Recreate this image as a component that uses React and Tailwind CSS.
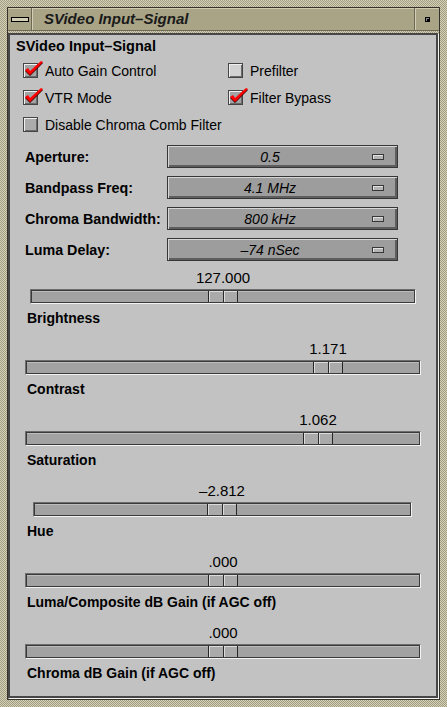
import React from 'react';

const CHECKS = [
  [
    { label: 'Auto Gain Control', checked: true, fill: 'bg-[#a3a3a3]' },
    { label: 'Prefilter', checked: false, fill: 'bg-[#d2d2d2]' },
  ],
  [
    { label: 'VTR Mode', checked: true, fill: 'bg-[#a3a3a3]' },
    { label: 'Filter Bypass', checked: true, fill: 'bg-[#a3a3a3]' },
  ],
  [{ label: 'Disable Chroma Comb Filter', checked: false, fill: 'bg-[#ababab]' }],
];

const MENUS = [
  { label: 'Aperture:', value: '0.5' },
  { label: 'Bandpass Freq:', value: '4.1 MHz' },
  { label: 'Chroma Bandwidth:', value: '800 kHz' },
  { label: 'Luma Delay:', value: '–74 nSec' },
];

// trough placement + thumb offset (inside trough) per scale
const SCALES = [
  { label: 'Brightness', value: '127.000', box: 'ml-[20px] w-[386px]', thumb: 'left-[176px]', text: 'left-[193px]' },
  { label: 'Contrast', value: '1.171', box: 'ml-[15px] w-[396px]', thumb: 'left-[286px]', text: 'left-[303px]' },
  { label: 'Saturation', value: '1.062', box: 'ml-[15px] w-[396px]', thumb: 'left-[276px]', text: 'left-[293px]' },
  { label: 'Hue', value: '–2.812', box: 'ml-[23px] w-[379px]', thumb: 'left-[172px]', text: 'left-[189px]' },
  { label: 'Luma/Composite dB Gain (if AGC off)', value: '.000', box: 'ml-[15px] w-[396px]', thumb: 'left-[181px]', text: 'left-[198px]' },
  { label: 'Chroma dB Gain (if AGC off)', value: '.000', box: 'ml-[15px] w-[396px]', thumb: 'left-[181px]', text: 'left-[198px]' },
];

function CheckBox({ label, checked, fill }) {
  return (
    <div className="flex items-center gap-[7px]">
      <div className="relative w-[15px] h-[15px]">
        <div className={`w-full h-full border border-[#454545] ${fill} shadow-[inset_1px_1px_0_#f0f0f0,inset_-1px_-1px_0_#6a6a6a]`} />
        {checked && (
          <svg className="absolute left-0 top-[-2px] overflow-visible" width="20" height="16" viewBox="0 0 20 16">
            <polygon points="2,10 5,8 7,11 18,1 20,2 7,15" fill="#3a0000" />
            <polygon points="2,9 5,7 7,10 18,0 20,1 7,14" fill="#ff0000" />
          </svg>
        )}
      </div>
      <span className="text-[14px] leading-[16px]">{label}</span>
    </div>
  );
}

function OptionMenu({ label, value }) {
  return (
    <div className="h-[31px] flex items-center pl-[15px]">
      <span className="w-[142px] font-bold text-[14.3px] leading-[16px]">{label}</span>
      <div className="w-[231px] h-[23px] flex items-center bg-[#9d9d9d] border border-[#363636] shadow-[inset_1px_1px_0_#d6d6d6,inset_-2px_-2px_0_#5e5e5e]">
        <span className="flex-1 text-center italic text-[14px] leading-[16px]">{value}</span>
        <div className="w-[12px] h-[6px] mr-[13px] border border-[#383838] bg-[#b4b4b4] shadow-[inset_1px_1px_0_#e2e2e2]" />
      </div>
    </div>
  );
}

function Scale({ label, value, box, thumb, text }) {
  return (
    <div className="h-[71px] flex flex-col">
      <div className={`relative h-[24px] ${box}`}>
        <span className={`absolute top-[4px] w-[70px] text-center text-[15px] leading-[17px] -translate-x-1/2 ${text}`}>
          {value}
        </span>
      </div>
      <div className={`h-[15px] border border-t-[#6c6c6c] border-l-[#6c6c6c] border-b-[#f2f2f2] border-r-[#f2f2f2] ${box}`}>
        <div className="relative h-full border border-[#3a3a3a] bg-[#a2a2a2] shadow-[inset_0_1px_0_#bcbcbc]">
          <div className={`absolute top-0 bottom-0 w-[30px] flex bg-[#aaaaaa] border-l border-r border-[#262626] shadow-[inset_1px_1px_0_#dcdcdc] ${thumb}`}>
            <div className="flex-1 border-r border-[#2a2a2a]" />
            <div className="flex-1 shadow-[inset_1px_1px_0_#dcdcdc]" />
          </div>
        </div>
      </div>
      <span className="mt-[6px] ml-[17px] font-bold text-[14px] leading-[16px]">{label}</span>
    </div>
  );
}

export default function App() {
  return (
    <div className="w-[447px] h-[707px] p-[7px] flex flex-col bg-[image:repeating-conic-gradient(#d5d1b9_0%_25%,#a19d83_0%_50%)] bg-[length:2px_2px] font-['Liberation_Sans',Arial,sans-serif] text-black">
      <div className="flex-1 flex flex-col border border-[#34322a]">
        {/* Title bar */}
        <div className="h-[23px] flex bg-[#a9a486] border-b border-[#6d6955] shadow-[inset_0_1px_0_#cfcbb2]">
          <div className="w-[24px] flex items-center justify-center border-r border-[#6d6955] shadow-[1px_0_0_#d3cfb6]">
            <div className="w-[18px] h-[5px] border border-black bg-[#d3cfb7]" />
          </div>
          <div className="flex-1 flex items-center pl-[12px] italic font-bold text-[15px] leading-[18px] text-[#1a1a1a]">
            SVideo Input–Signal
          </div>
          <div className="w-[24px] flex items-center justify-center border-l border-[#d3cfb6] shadow-[-1px_0_0_#6d6955]">
            <div className="w-[5px] h-[5px] bg-black border border-black shadow-[inset_1px_1px_0_#8a8a8a]" />
          </div>
        </div>

        {/* Work area */}
        <div className="flex-1 mt-[2px] mr-[1px] mb-[1px] flex flex-col bg-[#c2c2c2] border-2 border-[#474747] shadow-[1px_1px_0_#f4f4f4]">
          <div className="h-[22px] flex items-center pl-[6px] font-bold text-[14.5px] leading-[16px]">
            SVideo Input–Signal
          </div>

          {CHECKS.map((row, i) => (
            <div key={i} className="h-[27px] flex items-center pl-[13px]">
              {row.map((c, j) => (
                <div key={j} className={j === 0 ? 'w-[205px]' : ''}>
                  <CheckBox {...c} />
                </div>
              ))}
            </div>
          ))}

          <div className="mt-[3px]">
            {MENUS.map((m) => (
              <OptionMenu key={m.label} {...m} />
            ))}
          </div>

          {SCALES.map((s) => (
            <Scale key={s.label} {...s} />
          ))}
        </div>
      </div>
    </div>
  );
}
